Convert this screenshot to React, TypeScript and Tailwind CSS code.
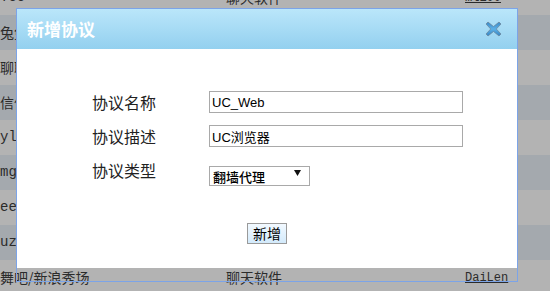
import React from "react";

const rows: { a: string; b: string; c: string; mono?: boolean }[] = [
  { a: "Yoo", b: "聊天软件", c: "ml100", mono: true },
  { a: "兔兔", b: "聊天软件", c: "admin" },
  { a: "聊聊", b: "聊天软件", c: "admin" },
  { a: "信信", b: "聊天软件", c: "admin" },
  { a: "ylue", b: "聊天软件", c: "admin", mono: true },
  { a: "mgee", b: "聊天软件", c: "admin", mono: true },
  { a: "ee00", b: "聊天软件", c: "admin", mono: true },
  { a: "uzzz", b: "聊天软件", c: "admin", mono: true },
  { a: "舞吧/新浪秀场", b: "聊天软件", c: "DaiLen" },
];

const cjk = { fontFamily: '"Noto Sans CJK SC", "Liberation Sans", sans-serif' };
const mono = { fontFamily: '"Liberation Mono", "Noto Sans CJK SC", monospace' };

function CloseIcon() {
  return (
    <svg width="17" height="16" viewBox="0 0 17 16">
      <defs>
        <linearGradient id="xg" x1="0" y1="0" x2="0" y2="1">
          <stop offset="0" stopColor="#3a88c6" />
          <stop offset="0.5" stopColor="#5cb0e6" />
          <stop offset="1" stopColor="#3583c2" />
        </linearGradient>
      </defs>
      <path
        d="M3 1 L8.5 5.5 L14 1 L16 3 L11.3 8 L16 13 L14 15 L8.5 10.5 L3 15 L1 13 L5.7 8 L1 3 Z"
        fill="url(#xg)"
        stroke="#6a8296"
        strokeWidth="0.7"
        strokeLinejoin="round"
      />
    </svg>
  );
}

export default function App() {
  return (
    <div className="relative w-[550px] h-[291px] overflow-hidden bg-[#b3b3b3]">
      {/* background table (dimmed) */}
      <div className="-mt-[20px] flex flex-col">
        {rows.map((r, i) => (
          <div
            key={i}
            className={`h-[35px] flex items-center text-[#2b2b2b] ${i % 2 === 1 ? "bg-[#a4a9ae]" : "bg-[#b3b3b3]"}`}
          >
            <div className="w-[226px] shrink-0 text-[14px] whitespace-nowrap" style={r.mono ? mono : cjk}>
              {r.a}
            </div>
            <div className="w-[239px] shrink-0 text-[14px]" style={cjk}>
              {r.b}
            </div>
            <div className="text-[12px] underline" style={mono}>
              {r.c}
            </div>
          </div>
        ))}
      </div>

      {/* dialog */}
      <div className="absolute left-[16px] top-[8px] w-[502px] h-[274px] border border-[#7ca4e8] flex flex-col">
        <div className="h-[40px] shrink-0 bg-gradient-to-b from-[#bae6fa] to-[#93d0ef] flex items-center justify-between pl-[10px] pr-[15px]">
          <span className="text-white text-[17px] font-bold" style={cjk}>
            新增协议
          </span>
          <CloseIcon />
        </div>
        <div className="h-[219px] shrink-0 bg-white flex flex-col pl-[75px] pt-[42px]" style={cjk}>
          <div className="flex items-center h-[22px]">
            <div className="w-[117px] text-[16px] text-[#222]">协议名称</div>
            <input
              readOnly
              value="UC_Web"
              className="w-[254px] h-[22px] border border-[#a9a9a9] px-[2px] text-[13px] text-black outline-none"
              style={{ fontFamily: '"Liberation Sans", "Noto Sans CJK SC", sans-serif' }}
            />
          </div>
          <div className="flex items-center h-[22px] mt-[12px]">
            <div className="w-[117px] text-[16px] text-[#222]">协议描述</div>
            <input
              readOnly
              value="UC浏览器"
              className="w-[254px] h-[22px] border border-[#a9a9a9] px-[2px] text-[13px] text-black outline-none"
              style={{ fontFamily: '"Liberation Sans", "Noto Sans CJK SC", sans-serif' }}
            />
          </div>
          <div className="flex items-center h-[20px] mt-[16px]">
            <div className="w-[117px] text-[16px] text-[#222] -mt-[6px]">协议类型</div>
            <div className="relative w-[101px] h-[20px]">
              <select
                className="appearance-none w-full h-full border border-[#a9a9a9] bg-white pl-[3px] text-[13px] font-medium text-black outline-none"
                style={cjk}
                defaultValue="fq"
              >
                <option value="fq">翻墙代理</option>
              </select>
              <svg
                className="pointer-events-none absolute right-[9px] top-[7px]"
                width="7"
                height="6"
                viewBox="0 0 7 6"
              >
                <path d="M0 0 H7 L3.5 6 Z" fill="#111" />
              </svg>
            </div>
          </div>
          <div className="-ml-[75px] flex justify-center mt-[40px]">
            <button
              className="w-[40px] h-[21px] p-0 border border-[#9a9a9a] bg-gradient-to-b from-[#f2f9ff] to-[#d3eafb] text-[14px] text-black leading-[19px]"
              style={cjk}
            >
              新增
            </button>
          </div>
        </div>
      </div>
    </div>
  );
}
